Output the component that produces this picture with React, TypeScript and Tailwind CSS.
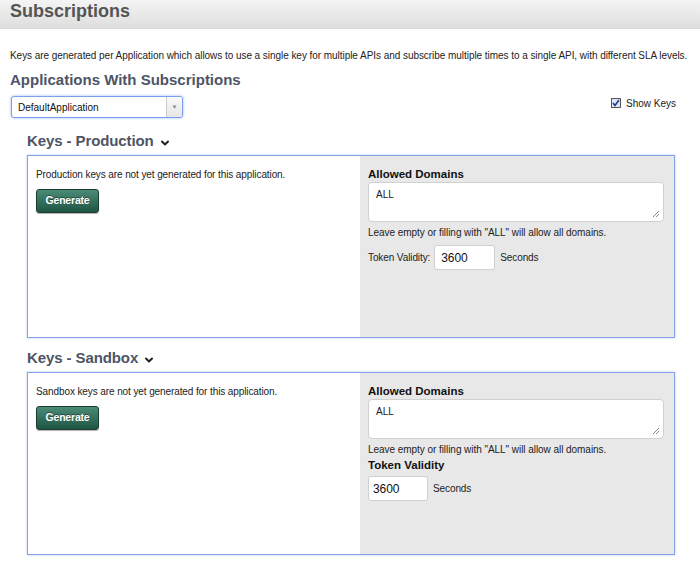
import { ChevronDown } from "lucide-react";

function KeysPanel({
  title,
  kind,
  inlineValidity,
}: {
  title: string;
  kind: string;
  inlineValidity: boolean;
}) {
  return (
    <section className="ml-[27px] mr-[25px]">
      <h3 className="flex items-center gap-[5px] h-[17px] text-[15px] font-bold tracking-[-0.1px] text-[#4d5566]">
        {title}
        <ChevronDown className="h-3 w-3 mt-[2px]" strokeWidth={4} color="#222" />
      </h3>
      <div className="mt-[5px] flex h-[183px] border border-[#86a3e8] shadow-[0_0_2px_rgba(100,140,230,0.5)]">
        <div className="w-[332px] bg-white pl-[8px] pt-[11px]">
          <p className="text-[10px] tracking-[-0.1px] text-[#222]">{kind} keys are not yet generated for this application.</p>
          <button className="mt-[7px] h-[24px] w-[63px] rounded-[3px] border border-[#1d3d33] bg-gradient-to-b from-[#4a8c78] to-[#1e5544] text-[10.5px] font-bold tracking-[-0.2px] text-white shadow-[0_1px_1px_rgba(0,0,0,0.3)] [text-shadow:0_-1px_0_rgba(0,0,0,0.4)]">
            Generate
          </button>
        </div>
        <div className="flex-1 bg-[#e8e8e8] pl-[8px] pr-[10px] pt-[11px]">
          <div className="text-[11.5px] font-bold leading-[14px] text-[#111]">Allowed Domains</div>
          <div className="relative mt-[1px] h-[40px] rounded-[4px] border border-[#d0d0d0] bg-white px-[7px] pt-[4px] text-[10px] text-[#222]">
            ALL
            <svg className="absolute bottom-[3px] right-[3px]" width="9" height="9" viewBox="0 0 9 9">
              <path d="M8 2 L2 8 M8 5 L5 8" stroke="#888" strokeWidth="1" />
            </svg>
          </div>
          <p className="mt-[3px] text-[10px] tracking-[-0.05px] text-[#222]">Leave empty or filling with "ALL" will allow all domains.</p>
          {inlineValidity ? (
            <div className="mt-[5px] flex items-center text-[10px] tracking-[-0.1px] text-[#222]">
              Token Validity:
              <span className="ml-[4px] flex h-[25px] w-[61px] items-center rounded-[3px] border border-[#d0d0d0] bg-white pl-[6px] text-[12px] text-[#111]">
                3600
              </span>
              <span className="ml-[5px]">Seconds</span>
            </div>
          ) : (
            <>
              <div className="mt-0 text-[11.5px] font-bold text-[#111]">Token Validity</div>
              <div className="mt-[2px] flex items-center text-[10px] tracking-[-0.1px] text-[#222]">
                <span className="flex h-[25px] w-[60px] items-center rounded-[3px] border border-[#d0d0d0] bg-white pl-[4px] text-[12px] text-[#111]">
                  3600
                </span>
                <span className="ml-[5px]">Seconds</span>
              </div>
            </>
          )}
        </div>
      </div>
    </section>
  );
}

export default function App() {
  return (
    <div className="h-[565px] w-[700px] overflow-hidden bg-white font-['Liberation_Sans',Arial,sans-serif]">
      <header className="h-[29px] border-b border-[#d8d8d8] bg-gradient-to-b from-[#f4f4f4] to-[#dedede] pl-[10px]">
        <h1 className="text-[18px] font-bold leading-[22px] text-[#555]">Subscriptions</h1>
      </header>
      <p className="mt-[20px] whitespace-nowrap pl-[10px] text-[10px] leading-[14px] tracking-[-0.05px] text-[#222]">
        Keys are generated per Application which allows to use a single key for multiple APIs and subscribe multiple times to a single API, with different SLA levels.
      </p>
      <h2 className="mt-[7px] pl-[10px] text-[15px] font-bold leading-[20px] text-[#4d5566]">Applications With Subscriptions</h2>
      <div className="mt-[6px] flex items-center justify-between pl-[11px] pr-[24px]">
        <div className="flex h-[22px] w-[172px] overflow-hidden rounded-[3px] border border-[#7aa0ea] bg-white shadow-[0_0_3px_rgba(90,140,230,0.6)]">
          <span className="flex flex-1 items-center pl-[6px] text-[10px] text-[#111]">DefaultApplication</span>
          <span className="flex w-[16px] items-center justify-center border-l border-[#ccc] bg-gradient-to-b from-[#fafafa] to-[#e6e6e6] text-[6px] text-[#888]">
            ▼
          </span>
        </div>
        <label className="mt-[-8px] flex items-center gap-[5px] text-[10px] text-[#222]">
          <span className="flex h-[10px] w-[10px] items-center justify-center border border-[#555] bg-[#dde6f8]">
            <svg width="8" height="8" viewBox="0 0 8 8">
              <path d="M1 4 L3 6.5 L7 1" stroke="#1f3f8a" strokeWidth="1.6" fill="none" />
            </svg>
          </span>
          Show Keys
        </label>
      </div>
      <div className="mt-[15px]">
        <KeysPanel title="Keys - Production" kind="Production" inlineValidity />
      </div>
      <div className="mt-[12px]">
        <KeysPanel title="Keys - Sandbox" kind="Sandbox" inlineValidity={false} />
      </div>
    </div>
  );
}
